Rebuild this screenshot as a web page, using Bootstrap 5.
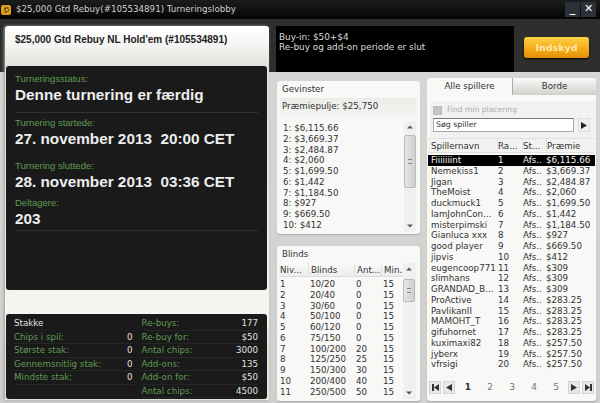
<!DOCTYPE html>
<html>
  <head>
    <title>Turneringslobby</title>
    <link href="https://cdn.jsdelivr.net/npm/bootstrap@5.3.3/dist/css/bootstrap.min.css" rel="stylesheet" />
    <style>
      html, body { margin: 0; width: 600px; height: 403px; overflow: hidden; }
      body { font-family: "DejaVu Sans", sans-serif; font-size: 8.7px; line-height: 10.75px; color: #333; }
      .lobby-shell { width: 600px; height: 403px; background: linear-gradient(#2e2e2c 0, #2e2e2c 72px, #d6d6d4 72px, #cfcfcd 403px); }
      .title-strip { height: 19px; background: linear-gradient(#1c1c1c, #050505); color: #d0d0d0; font-size: 8.7px; line-height: 19px; padding-left: 1px; }
      .app-icon { width: 10px; height: 10px; background: #dc9c1c; border-radius: 2px; margin-right: 5px; }
      .app-icon svg { display: block; }
      .win-btn { width: 15px; height: 15px; background: #2c3038; color: #fff; font-weight: bold; font-size: 11px; line-height: 14px; text-align: center; margin-left: 1px; }
      .left-col { width: 264px; height: 374px; margin: 7px 0 0 5px; background: linear-gradient(#ffffff 0, #f3f3f1 20px, #e2e2de 40px, #dcdcd8 60px, #f6f6f3 292px, #e3e3dd 315px); border-radius: 3px 3px 0 0; padding: 0 1px; box-shadow: -1px 0 3px #a0a0a0; }
      .lobby-head { height: 40px; padding: 8px 9px 0; font-family: "Liberation Sans", sans-serif; font-weight: bold; font-size: 10px; line-height: 11px; color: #222; }
      .dark-box { background: #1a1a1a; border-radius: 3px; width: 261px; }
      .status-box { height: 224px; padding: 7px 9px 0; font-family: "Liberation Sans", sans-serif; color: #ededed; font-weight: bold; }
      .status-box .lbl { color: #5f9a52; font-weight: normal; font-size: 9.5px; line-height: 11px; }
      .status-box .big { font-size: 15.3px; line-height: 18px; white-space: pre; margin-top: 2px; }
      .status-line { border-bottom: 1px solid #303030; }
      .lbl-gap-a { margin-top: 4px; }
      .lbl-gap-b { margin-top: 12px; }
      .lbl-gap-c { margin-top: 6px; }
      .pad-a { padding-bottom: 8px; }
      .pad-b { padding-bottom: 2px; }
      .stake-box { height: 85px; margin-top: 24px; padding: 3px 9px 0 8px; color: #e0e0e0; }
      .stake-row { height: 13.5px; line-height: 13.5px; border-bottom: 1px solid #262626; }
      .stake-row span:first-child { color: #5f9a52; }
      .stake-title { border: 0; }
      .stake-col-l { width: 119px; }
      .stake-col-r { width: 117px; margin-left: 9px; }
      .right-col { width: 320px; margin: 7px 0 0 7px; }
      .buy-box { width: 238px; height: 46px; background: #000; color: #dcdcdc; padding: 6px 3px 0; font-size: 8.9px; line-height: 10px; }
      .join-btn { width: 65px; height: 21px; margin: 11px 0 0 10px; padding: 0; border: 0; border-radius: 3px; background: linear-gradient(#ffd24a, #f4a914 60%, #e08f08); box-shadow: 0 1px 2px #000; color: #ffe9a8; font-size: 9.5px; font-weight: bold; line-height: 21px; }
      .pale-panel { background: #f8f8f6; border-radius: 3px; box-shadow: 0 1px 1px #aaa; }
      .prize-panel { width: 143px; height: 153px; margin: 9px 0 0 1px; }
      .blind-panel { width: 143px; height: 155px; margin: 12px 0 0 1px; }
      .panel-title { height: 17px; line-height: 17px; padding-left: 5px; }
      .pool-line { height: 21px; margin: 0 3px; padding: 3px 2px; background: linear-gradient(#ecece9, #f4f4f2); }
      .prize-wrap { height: 113px; padding: 2px 0 0 6px; }
      .blind-wrap { height: 136px; padding-left: 2px; }
      .list-rows { flex: 1; padding-top: 2px; }
      .fake-scroll { width: 12px; margin-right: 4px; position: relative; background: #f0f0ee; }
      .scroll-arrow { position: absolute; left: 3px; width: 6px; height: 6px; }
      .arrow-top { top: 3px; }
      .arrow-bot { bottom: 3px; }
      .fake-thumb { position: absolute; left: 0; width: 12px; background: linear-gradient(90deg, #e6e6e6, #cfcfcf); border: 1px solid #bbb; border-radius: 2px; }
      .thumb-tall { top: 14px; height: 53px; }
      .thumb-short { top: 16px; height: 23px; }
      .thumb-grip { position: absolute; left: 3px; top: 50%; width: 4px; height: 5px; margin-top: -3px; border-top: 1px solid #888; border-bottom: 1px solid #888; }
      .grid-head { height: 14px; line-height: 14px; background: linear-gradient(#fbfbfa, #ececea); border-bottom: 1px solid #ddd; }
      .blind-rows { width: 124px; }
      .blind-lines { margin-top: 2px; }
      .cell { white-space: nowrap; overflow: hidden; }
      .cell-sep { border-right: 1px solid #e2e2e0; }
      .w-niv { width: 30px; padding-left: 1px; }
      .w-blind { width: 46px; padding-left: 2px; }
      .w-ant { width: 27px; padding-left: 2px; }
      .w-min { padding-left: 2px; }
      .d-niv { width: 31px; padding-left: 1px; }
      .d-blind { width: 46px; }
      .d-ant { width: 27px; }
      .player-panel { width: 169px; height: 323px; margin: 6px 0 0 7px; }
      .tab-strip { height: 17px; }
      .tab-on { width: 85px; line-height: 17px; text-align: center; background: #f8f8f6; border-radius: 3px 3px 0 0; }
      .tab-off { flex: 1; line-height: 17px; text-align: center; background: linear-gradient(#fafafa, #d0d0cc); border-radius: 0 3px 0 0; border-left: 1px solid #aaa; }
      .search-area { height: 37px; margin: 6px 1px 0 3px; background: #f1f1ef; padding: 4px 2px 0 3px; }
      .tick-box { width: 9px; height: 9px; background: #c4c4c4; border: 1px solid #bbb; margin-right: 5px; }
      .find-lbl { color: #adadad; font-size: 7.6px; line-height: 10px; }
      .search-input { width: 141px; height: 14px; margin-top: 3px; border: 1px solid #aaa; border-top-color: #777; background: #fff; font-size: 7.8px; line-height: 12px; padding-left: 2px; }
      .go-btn { width: 12px; height: 14px; margin: 3px 0 0 4px; background: #eee; border: 1px solid #ddd; display: flex; align-items: center; justify-content: center; }
      .player-head { height: 15px; line-height: 15px; padding-left: 3px; margin: 0 1px; background: #f2f2f0; border-bottom: 1px solid #e0e0e0; border-top: 1px solid #e0e0e0; }
      .h-name { width: 67px; }
      .h-rank { width: 25px; }
      .h-stat { width: 24px; }
      .player-rows { margin: 2px 1px 0; padding-left: 2px; }
      .player-row { height: 10.75px; }
      .row-active { background: #000; color: #f0f0f0; margin-left: -2px; padding-left: 2px; }
      .col-name { width: 68px; padding-left: 1px; }
      .col-rank { width: 25px; }
      .col-stat { width: 23px; }
      .pager { margin: 11px 2px 0 2px; height: 13px; }
      .page-sq { width: 12px; height: 13px; margin-right: 2px; background: #e8e8e6; border: 1px solid #d4d4d4; display: flex; align-items: center; justify-content: center; }
      .page-sq svg, .go-btn svg { display: block; }
      .page-num { width: 22px; text-align: center; color: #777; font-size: 9px; }
      .page-on { color: #333; font-weight: bold; }
    </style>
  </head>
  <body>
    <div class="lobby-shell">
      <div class="title-strip d-flex align-items-center">
        <span class="app-icon"><svg width="10" height="10" viewBox="0 0 10 10"><path d="M3 3 L7 2 L8 6 L4 8 Z" fill="#6b4a0c"/><path d="M4.5 4 L6.5 3.6 L7 5.6 L5 6.2 Z" fill="#f0c040"/></svg></span>
        <span class="flex-grow-1">$25,000 Gtd Rebuy(#105534891) Turneringslobby</span>
        <span class="win-btn">_</span>
        <span class="win-btn me-1">✕</span>
      </div>
      <div class="d-flex">
        <div class="left-col">
          <div class="lobby-head">$25,000 Gtd Rebuy NL Hold'em (#105534891)</div>
          <div class="dark-box status-box">
            <div class="lbl">Turneringsstatus:</div>
            <div class="big status-line pad-a">Denne turnering er færdig</div>
            <div class="lbl lbl-gap-a">Turnering startede:</div>
            <div class="big">27. november 2013  20:00 CET</div>
            <div class="lbl lbl-gap-b">Turnering sluttede:</div>
            <div class="big">28. november 2013  03:36 CET</div>
            <div class="lbl lbl-gap-c">Deltagere:</div>
            <div class="big status-line pad-b">203</div>
          </div>
          <div class="dark-box stake-box d-flex">
            <div class="stake-col-l" id="stakeLeft"></div>
            <div class="stake-col-r" id="stakeRight"></div>
          </div>
        </div>
        <div class="right-col">
          <div class="d-flex">
            <div class="buy-box">Buy-in: $50+$4<br />Re-buy og add-on periode er slut</div>
            <button class="join-btn" type="button">Indskyd</button>
          </div>
          <div class="d-flex">
            <div>
              <div class="pale-panel prize-panel">
                <div class="panel-title">Gevinster</div>
                <div class="pool-line">Præmiepulje: $25,750</div>
                <div class="d-flex prize-wrap">
                  <div class="list-rows" id="prizeRows"></div>
                  <div class="fake-scroll">
                    <svg class="scroll-arrow arrow-top" viewBox="0 0 6 6"><path d="M3 1.5 L6 4.5 H0 Z" fill="#555"/></svg>
                    <span class="fake-thumb thumb-tall"><span class="thumb-grip"></span></span>
                    <svg class="scroll-arrow arrow-bot" viewBox="0 0 6 6"><path d="M3 4.5 L6 1.5 H0 Z" fill="#555"/></svg>
                  </div>
                </div>
              </div>
              <div class="pale-panel blind-panel">
                <div class="panel-title">Blinds</div>
                <div class="d-flex blind-wrap">
                  <div class="blind-rows">
                    <div class="grid-head d-flex">
                      <span class="cell cell-sep w-niv">Niv...</span>
                      <span class="cell cell-sep w-blind">Blinds</span>
                      <span class="cell cell-sep w-ant">Ant...</span>
                      <span class="cell w-min">Min.</span>
                    </div>
                    <div class="blind-lines" id="blindRows"></div>
                  </div>
                  <div class="fake-scroll flex-grow-1">
                    <svg class="scroll-arrow arrow-top" viewBox="0 0 6 6"><path d="M3 1.5 L6 4.5 H0 Z" fill="#555"/></svg>
                    <span class="fake-thumb thumb-short"><span class="thumb-grip"></span></span>
                    <svg class="scroll-arrow arrow-bot" viewBox="0 0 6 6"><path d="M3 4.5 L6 1.5 H0 Z" fill="#555"/></svg>
                  </div>
                </div>
              </div>
            </div>
            <div class="pale-panel player-panel">
              <div class="tab-strip d-flex">
                <div class="tab-on">Alle spillere</div>
                <div class="tab-off">Borde</div>
              </div>
              <div class="search-area">
                <div class="d-flex align-items-center">
                  <span class="tick-box"></span>
                  <span class="find-lbl">Find min placering</span>
                </div>
                <div class="d-flex">
                  <div class="search-input">Søg spiller</div>
                  <div class="go-btn"><svg width="6" height="7" viewBox="0 0 6 7"><path d="M0 0 L6 3.5 L0 7 Z" fill="#222"/></svg></div>
                </div>
              </div>
              <div class="player-head d-flex">
                <span class="cell cell-sep h-name">Spillernavn</span>
                <span class="cell cell-sep h-rank">Ra...</span>
                <span class="cell cell-sep h-stat">St...</span>
                <span class="cell">Præmie</span>
              </div>
              <div class="player-rows" id="playerRows"></div>
              <div class="pager d-flex align-items-center">
                <span class="page-sq"><svg width="7" height="7" viewBox="0 0 7 7"><path d="M0 0 H2 V7 H0 Z M7 0 V7 L2 3.5 Z" fill="#333"/></svg></span>
                <span class="page-sq"><svg width="6" height="7" viewBox="0 0 6 7"><path d="M6 0 V7 L0 3.5 Z" fill="#333"/></svg></span>
                <span class="page-num page-on">1</span>
                <span class="page-num">2</span>
                <span class="page-num">3</span>
                <span class="page-num">4</span>
                <span class="page-num me-auto">5</span>
                <span class="page-sq"><svg width="6" height="7" viewBox="0 0 6 7"><path d="M0 0 V7 L6 3.5 Z" fill="#333"/></svg></span>
                <span class="page-sq me-0"><svg width="7" height="7" viewBox="0 0 7 7"><path d="M0 0 V7 L5 3.5 Z M5 0 H7 V7 H5 Z" fill="#333"/></svg></span>
              </div>
            </div>
          </div>
        </div>
      </div>
    </div>

    <script src="https://cdn.jsdelivr.net/npm/bootstrap@5.3.3/dist/js/bootstrap.bundle.min.js"></script>
    <script>
      const stakeLeft = [["Chips i spil:", "0"], ["Største stak:", "0"], ["Gennemsnitlig stak:", "0"], ["Mindste stak:", "0"]];
      const stakeRight = [["Re-buys:", "177"], ["Re-buy for:", "$50"], ["Antal chips:", "3000"], ["Add-ons:", "135"], ["Add-on for:", "$50"], ["Antal chips:", "4500"]];
      const prizes = ["$6,115.66", "$3,669.37", "$2,484.87", "$2,060", "$1,699.50", "$1,442", "$1,184.50", "$927", "$669.50", "$412"];
      const blinds = [["10/20", 0], ["20/40", 0], ["30/60", 0], ["50/100", 0], ["60/120", 0], ["75/150", 0], ["100/200", 20], ["125/250", 25], ["150/300", 30], ["200/400", 40], ["250/500", 50]];
      const players = [
        ["Fiiiiiiint", "$6,115.66"], ["Nemekiss1", "$3,669.37"], ["Jigan", "$2,484.87"], ["TheMoist", "$2,060"],
        ["duckmuck1", "$1,699.50"], ["IamJohnCon...", "$1,442"], ["misterpimski", "$1,184.50"], ["Gianluca xxx", "$927"],
        ["good player", "$669.50"], ["jipvis", "$412"], ["eugencoop771", "$309"], ["slimhans", "$309"],
        ["GRANDAD_B...", "$309"], ["ProActive", "$283.25"], ["PavlikanII", "$283.25"], ["MAMOHT_T", "$283.25"],
        ["gifuhornet", "$283.25"], ["kuximaxi82", "$257.50"], ["jyberx", "$257.50"], ["vfrsigi", "$257.50"],
      ];

      function stakeRow(item) {
        return `<div class="stake-row d-flex justify-content-between"><span>${item[0]}</span><span>${item[1]}</span></div>`;
      }

      document.getElementById("stakeLeft").innerHTML =
        '<div class="stake-row stake-title">Stakke</div>' + stakeLeft.map(stakeRow).join("");
      document.getElementById("stakeRight").innerHTML = stakeRight.map(stakeRow).join("");

      document.getElementById("prizeRows").innerHTML = prizes
        .map((p, i) => `<div>${i + 1}: ${p}</div>`)
        .join("");

      document.getElementById("blindRows").innerHTML = blinds
        .map(
          (b, i) =>
            `<div class="d-flex"><span class="d-niv">${i + 1}</span><span class="d-blind">${b[0]}</span><span class="d-ant">${b[1]}</span><span>15</span></div>`
        )
        .join("");

      document.getElementById("playerRows").innerHTML = players
        .map(
          (p, i) =>
            `<div class="player-row d-flex ${i === 0 ? "row-active" : ""}"><span class="cell col-name">${p[0]}</span><span class="col-rank">${i + 1}</span><span class="col-stat">Afs..</span><span>${p[1]}</span></div>`
        )
        .join("");
    </script>
  </body>
</html>
